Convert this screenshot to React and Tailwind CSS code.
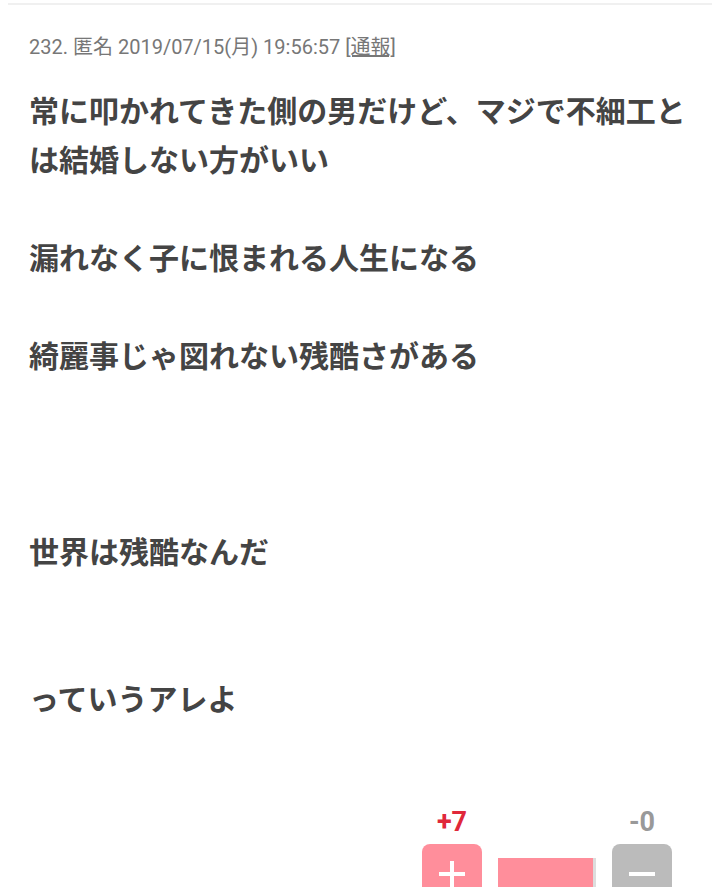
import React from "react";

const lines = [
  "常に叩かれてきた側の男だけど、マジで不細工とは結婚しない方がいい",
  "",
  "漏れなく子に恨まれる人生になる",
  "",
  "綺麗事じゃ図れない残酷さがある",
  "",
  "",
  "",
  "世界は残酷なんだ",
  "",
  "",
  "っていうアレよ",
];

export default function App() {
  return (
    <div className="w-[720px] h-[887px] overflow-hidden bg-white">
      <div className="mx-[8px] mt-[3px] h-[2px] bg-[#f0f0f0]" />
      <div
        className="pl-[29px] pt-[30px] text-[20px] leading-[24px] text-[#777]"
        style={{ fontFamily: 'Roboto, "Noto Sans CJK JP", sans-serif' }}
      >
        232. 匿名 2019/07/15(月) 19:56:57 <span className="underline">[通報]</span>
      </div>
      <div
        className="pl-[29px] pr-[20px] mt-[26px] text-[30px] leading-[49px] font-bold text-[#444]"
        style={{ fontFamily: '"Noto Sans CJK JP", sans-serif' }}
      >
        {lines.map((l, i) => (
          <p key={i} className="min-h-[49px]">
            {l}
          </p>
        ))}
      </div>
      <div
        className="mt-[85px] flex justify-end pr-[48px]"
        style={{ fontFamily: 'Roboto, "Noto Sans CJK JP", sans-serif' }}
      >
        <div className="flex items-start gap-[16px]">
          <div className="flex flex-col items-center w-[60px]">
            <div className="text-[27px] leading-[30px] font-bold text-[#e0283a]">+7</div>
            <div className="mt-[7px] w-[60px] h-[60px] rounded-[8px] bg-[#ff8e9b] flex items-center justify-center">
              <svg width="30" height="30" viewBox="0 0 30 30">
                <path d="M15 2v26M2 15h26" stroke="white" strokeWidth="4" />
              </svg>
            </div>
          </div>
          <div className="mt-[51px] w-[98px] h-[40px] bg-[#ddd] flex">
            <div className="w-[95px] h-full bg-[#ff8e9b]" />
          </div>
          <div className="flex flex-col items-center w-[60px]">
            <div className="text-[27px] leading-[30px] font-bold text-[#999]">-0</div>
            <div className="mt-[7px] w-[60px] h-[60px] rounded-[8px] bg-[#bbb] flex items-center justify-center">
              <svg width="30" height="30" viewBox="0 0 30 30">
                <path d="M2 15h26" stroke="white" strokeWidth="4" />
              </svg>
            </div>
          </div>
        </div>
      </div>
    </div>
  );
}
